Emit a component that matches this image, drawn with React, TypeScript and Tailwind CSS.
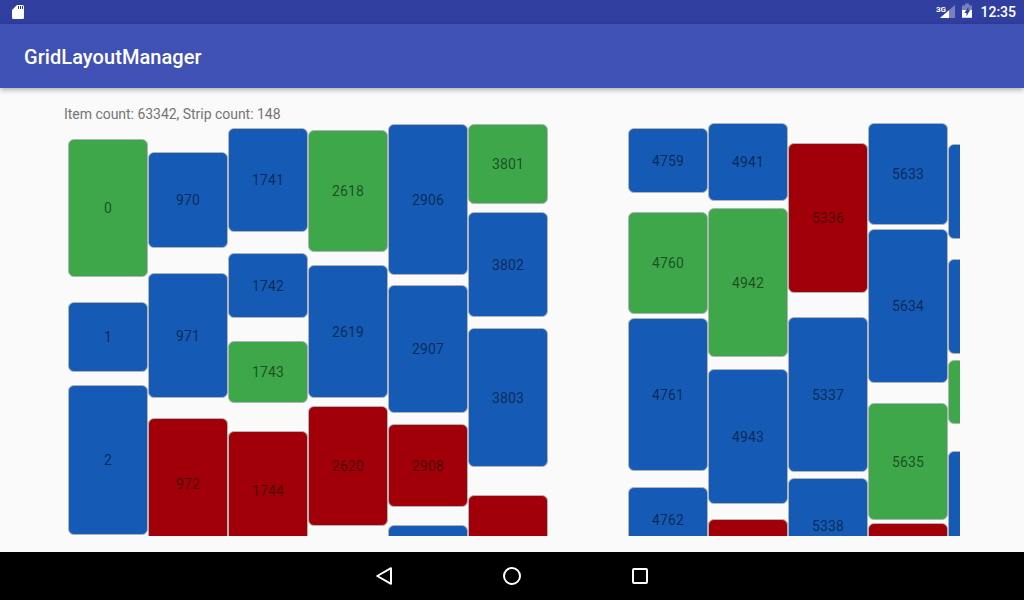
import React from 'react';

type Tile = { label?: string; color: string; box: string };

const BLUE = 'bg-[#155bb6]';
const GREEN = 'bg-[#3da74a]';
const RED = 'bg-[#a10008]';

const leftStrip: Tile[][] = [
  [
    { label: '0', color: GREEN, box: 'mt-[16px] h-[138px]' },
    { label: '1', color: BLUE, box: 'mt-[25px] h-[70px]' },
    { label: '2', color: BLUE, box: 'mt-[13px] h-[150px]' },
  ],
  [
    { label: '970', color: BLUE, box: 'mt-[29px] h-[96px]' },
    { label: '971', color: BLUE, box: 'mt-[25px] h-[125px]' },
    { label: '972', color: RED, box: 'mt-[20px] h-[132px]' },
  ],
  [
    { label: '1741', color: BLUE, box: 'mt-[5px] h-[104px]' },
    { label: '1742', color: BLUE, box: 'mt-[21px] h-[65px]' },
    { label: '1743', color: GREEN, box: 'mt-[23px] h-[62px]' },
    { label: '1744', color: RED, box: 'mt-[28px] h-[120px]' },
  ],
  [
    { label: '2618', color: GREEN, box: 'mt-[7px] h-[122px]' },
    { label: '2619', color: BLUE, box: 'mt-[13px] h-[133px]' },
    { label: '2620', color: RED, box: 'mt-[8px] h-[120px]' },
  ],
  [
    { label: '2906', color: BLUE, box: 'mt-[1px] h-[151px]' },
    { label: '2907', color: BLUE, box: 'mt-[10px] h-[128px]' },
    { label: '2908', color: RED, box: 'mt-[11px] h-[83px]' },
    { color: BLUE, box: 'mt-[18px] h-[80px]' },
  ],
  [
    { label: '3801', color: GREEN, box: 'mt-[1px] h-[80px]' },
    { label: '3802', color: BLUE, box: 'mt-[8px] h-[105px]' },
    { label: '3803', color: BLUE, box: 'mt-[11px] h-[139px]' },
    { color: RED, box: 'mt-[28px] h-[80px]' },
  ],
];

const rightStrip: Tile[][] = [
  [
    { label: '4759', color: BLUE, box: 'mt-[5px] h-[65px]' },
    { label: '4760', color: GREEN, box: 'mt-[19px] h-[102px]' },
    { label: '4761', color: BLUE, box: 'mt-[4px] h-[153px]' },
    { label: '4762', color: BLUE, box: 'mt-[16px] h-[66px]' },
  ],
  [
    { label: '4941', color: BLUE, box: 'mt-0 h-[78px]' },
    { label: '4942', color: GREEN, box: 'mt-[7px] h-[149px]' },
    { label: '4943', color: BLUE, box: 'mt-[12px] h-[135px]' },
    { color: RED, box: 'mt-[15px] h-[60px]' },
  ],
  [
    { label: '5336', color: RED, box: 'mt-[20px] h-[150px]' },
    { label: '5337', color: BLUE, box: 'mt-[24px] h-[155px]' },
    { label: '5338', color: BLUE, box: 'mt-[6px] h-[96px]' },
  ],
  [
    { label: '5633', color: BLUE, box: 'mt-0 h-[102px]' },
    { label: '5634', color: BLUE, box: 'mt-[4px] h-[154px]' },
    { label: '5635', color: GREEN, box: 'mt-[20px] h-[117px]' },
    { color: RED, box: 'mt-[3px] h-[60px]' },
  ],
  [
    { color: BLUE, box: 'mt-[21px] h-[95px]' },
    { color: BLUE, box: 'mt-[20px] h-[95px]' },
    { color: GREEN, box: 'mt-[6px] h-[64px]' },
    { color: BLUE, box: 'mt-[27px] h-[100px]' },
  ],
];

const Strip = ({ columns }: { columns: Tile[][] }) => (
  <div className="flex shrink-0">
    {columns.map((column, i) => (
      <div key={i} className="flex w-[80px] shrink-0 flex-col">
        {column.map((tile, j) => (
          <div
            key={j}
            className={`${tile.box} ${tile.color} flex w-[80px] shrink-0 items-center justify-center rounded-[6px] border border-[#b0b4b8] pt-[1px] text-[14px] tracking-[0.1px] text-black/55`}
          >
            {tile.label}
          </div>
        ))}
      </div>
    ))}
  </div>
);

export default function App() {
  return (
    <div className="flex h-[600px] w-[1024px] flex-col overflow-hidden bg-[#fafafa] font-['Roboto',sans-serif]">
      {/* status bar */}
      <div className="flex h-6 shrink-0 items-center justify-between bg-[#303f9f] pl-3 pr-2">
        <svg width="12" height="14" viewBox="0 0 12 14" fill="#fff">
          <path d="M5 0h5.5A1.5 1.5 0 0 1 12 1.5v11a1.5 1.5 0 0 1-1.5 1.5h-9A1.5 1.5 0 0 1 0 12.500V5zM6 1v3h1V1zM8 1v3h1V1zM10 1v3h1V1z" fillRule="evenodd" />
        </svg>
        <div className="flex items-center">
          <svg width="20" height="16" viewBox="0 0 20 16" className="mr-[5px] overflow-visible">
            <path d="M18 1v13H3z" fill="#fff" fillOpacity="0.35" />
            <path d="M12 6.200V14H3z" fill="#fff" />
            <text x="-1" y="8" fontSize="8" fontWeight="700" fill="#fff" fontFamily="Roboto">3G</text>
          </svg>
          <svg width="10" height="16" viewBox="0 0 10 16" className="mr-[8px] overflow-visible">
            <path d="M3-.5h4V1.500h3V13.700H0V1.500h3z" fill="#fff" fillOpacity="0.35" />
            <path d="M0 6h10v7.700H0z" fill="#fff" />
            <path d="M6.500 2.500 2.500 9h2v3.500L8 6H6.500z" fill="#303f9f" />
          </svg>
          <span className="text-[14px] font-medium leading-none text-white">12:35</span>
        </div>
      </div>

      {/* toolbar */}
      <div className="relative z-10 flex h-16 shrink-0 items-center bg-[#3f51b5] pl-6 pt-[2px] text-[20px] font-medium tracking-[0.06px] text-white shadow-[0_2px_5px_rgba(0,0,0,0.3)]">
        GridLayoutManager
      </div>

      {/* content */}
      <div className="flex min-h-0 flex-1 flex-col px-16 pb-4 pt-4">
        <div className="h-[19px] shrink-0 text-[14px] leading-[20px] tracking-[-0.03px] text-[#757575]">
          Item count: 63342, Strip count: 148
        </div>
        <div className="flex min-h-0 flex-1 gap-20 overflow-hidden pl-1">
          <Strip columns={leftStrip} />
          <Strip columns={rightStrip} />
        </div>
      </div>

      {/* nav bar */}
      <div className="flex h-12 shrink-0 items-center justify-center gap-[88px] bg-black">
        <svg width="40" height="24" viewBox="0 0 40 24" fill="none" stroke="#fff" strokeWidth="2">
          <path d="M27 4.200v15.600L13.200 12z" strokeLinejoin="round" />
        </svg>
        <svg width="40" height="24" viewBox="0 0 40 24" fill="none" stroke="#fff" strokeWidth="2">
          <circle cx="20" cy="12" r="8" />
        </svg>
        <svg width="40" height="24" viewBox="0 0 40 24" fill="none" stroke="#fff" strokeWidth="2">
          <rect x="13" y="5" width="14" height="14" rx="1" />
        </svg>
      </div>
    </div>
  );
}
